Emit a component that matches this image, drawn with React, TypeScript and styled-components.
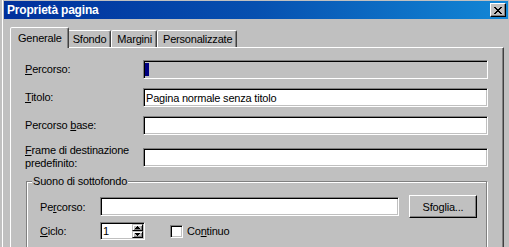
import React from 'react';
import styled, { createGlobalStyle } from 'styled-components';

const GlobalStyle = createGlobalStyle`
  * {
    box-sizing: border-box;
  }
  html,
  body {
    margin: 0;
    height: 100%;
    overflow: hidden;
    background: #c0c0c0;
  }
  body {
    font-family: 'Liberation Sans', Arial, sans-serif;
    font-size: 11px;
    letter-spacing: -0.2px;
    color: #000;
  }
  u {
    text-underline-offset: 1px;
  }
`;

const Window = styled.div`
  width: 509px;
  min-height: 100vh;
  padding: 1px 1px 0 4px;
  background: #c0c0c0;
  box-shadow: inset 2px 0 #c0c0c0, inset 3px 0 #fff;
`;

const TitleBar = styled.div`
  height: 18px;
  display: flex;
  align-items: center;
  justify-content: space-between;
  padding: 0 2px 0 3px;
  background: linear-gradient(to right, #00309c 0%, #0650b0 50%, #1287d6 100%);
`;

const Title = styled.span`
  color: #fff;
  font-weight: bold;
  font-size: 12px;
`;

const CloseButton = styled.div`
  width: 16px;
  height: 14px;
  display: flex;
  align-items: center;
  justify-content: center;
  background: #c0c0c0;
  border: 1px solid;
  border-color: #fff #000 #000 #fff;
  box-shadow: inset -1px -1px #808080;
`;

const Body = styled.div`
  padding: 8px 4px 0 6px;
`;

const Tabs = styled.div`
  display: flex;
  align-items: flex-end;
  height: 20px;
  padding-left: 2px;
  position: relative;
  z-index: 1;
`;

const Tab = styled.div<{ $active?: boolean }>`
  height: ${(p) => (p.$active ? 21 : 17)}px;
  margin: ${(p) => (p.$active ? '0 -2px -1px -2px' : '0')};
  padding: ${(p) => (p.$active ? '0 6px 0 7px' : '0 4px 0 5px')};
  display: flex;
  align-items: center;
  background: #c0c0c0;
  border: 1px solid;
  border-bottom: none;
  border-color: #fff #404040 transparent #fff;
  border-radius: 2px 2px 0 0;
  box-shadow: inset -1px 0 #808080;
  position: relative;
  z-index: ${(p) => (p.$active ? 2 : 1)};
  white-space: nowrap;
`;

const Panel = styled.div`
  min-height: 260px;
  padding: 12px 15px 20px 14px;
  border: 1px solid;
  border-color: #fff #404040 #404040 #fff;
  box-shadow: inset -1px -1px #808080;
`;

const Form = styled.div`
  display: grid;
  grid-template-columns: 118px 1fr;
  row-gap: 9px;
  align-items: center;
`;

const FormLabel = styled.div<{ $multi?: boolean }>`
  line-height: 13px;
  align-self: ${(p) => (p.$multi ? 'start' : 'center')};
`;

const Field = styled.div<{ $disabled?: boolean; $width?: number }>`
  height: ${(p) => (p.$width ? 18 : 19)}px;
  ${(p) => (p.$width ? `width: ${p.$width}px;` : 'flex: 1;')}
  display: flex;
  align-items: center;
  padding: 0 2px;
  background: ${(p) => (p.$disabled ? '#c0c0c0' : '#fff')};
  border: 1px solid;
  border-color: #808080 #fff #fff #808080;
  box-shadow: inset 1px 1px #000, inset -1px -1px #c0c0c0;
  white-space: nowrap;
  overflow: hidden;
`;

const Selection = styled.span`
  width: 4px;
  height: 13px;
  margin-left: -1px;
  background: #000080;
`;

const Group = styled.fieldset`
  margin: 5px 1px 0 1px;
  padding: 7px 9px 40px 13px;
  border: 1px solid #808080;
  box-shadow: inset 1px 1px #fff, 1px 1px #fff;
`;

const Legend = styled.legend`
  margin-left: -8px;
  padding: 0 1px;
  line-height: 13px;
  background: #c0c0c0;
`;

const GroupRow = styled.div<{ $gap?: number }>`
  display: flex;
  align-items: center;
  margin-top: ${(p) => p.$gap ?? 0}px;
`;

const GroupLabel = styled.div`
  width: 60px;
  flex: none;
`;

const Button = styled.div`
  width: 68px;
  height: 23px;
  margin-left: 10px;
  flex: none;
  display: flex;
  align-items: center;
  justify-content: center;
  background: #c0c0c0;
  border: 1px solid;
  border-color: #fff #000 #000 #fff;
  box-shadow: inset -1px -1px #808080;
`;

const SpinValue = styled.span`
  flex: 1;
`;

const SpinButtons = styled.div`
  display: flex;
  flex-direction: column;
  width: 11px;
  height: 14px;
  margin-right: -1px;
`;

const SpinButton = styled.div`
  flex: 1;
  display: flex;
  align-items: center;
  justify-content: center;
  background: #c0c0c0;
  border: 1px solid;
  border-color: #c0c0c0 #000 #000 #c0c0c0;
  box-shadow: inset 1px 1px #fff, inset -1px -1px #808080;
`;

const CheckBox = styled.div`
  width: 13px;
  height: 13px;
  margin-left: 25px;
  background: #fff;
  border: 1px solid;
  border-color: #808080 #fff #fff #808080;
  box-shadow: inset 1px 1px #000, inset -1px -1px #c0c0c0;
`;

const CheckLabel = styled.span`
  margin-left: 4px;
`;

const CloseIcon = () => (
  <svg width="8" height="7" viewBox="0 0 8 7" shapeRendering="crispEdges">
    <path
      fill="#000"
      d="M0 0h2v1H0zM6 0h2v1H6zM1 1h2v1H1zM5 1h2v1H5zM2 2h4v1H2zM3 3h2v1H3zM2 4h4v1H2zM1 5h2v1H1zM5 5h2v1H5zM0 6h2v1H0zM6 6h2v1H6z"
    />
  </svg>
);

const Arrow = ({ down }: { down?: boolean }) => (
  <svg width="5" height="3" viewBox="0 0 5 3" shapeRendering="crispEdges">
    <path
      fill="#000"
      d={down ? 'M0 0h5v1H0zM1 1h3v1H1zM2 2h1v1H2z' : 'M2 0h1v1H2zM1 1h3v1H1zM0 2h5v1H0z'}
    />
  </svg>
);

const tabs = ['Generale', 'Sfondo', 'Margini', 'Personalizzate'];

function App() {
  return (
    <>
      <GlobalStyle />
      <Window>
        <TitleBar>
          <Title>Proprietà pagina</Title>
          <CloseButton>
            <CloseIcon />
          </CloseButton>
        </TitleBar>
        <Body>
          <Tabs>
            {tabs.map((t, i) => (
              <Tab key={t} $active={i === 0}>
                {t}
              </Tab>
            ))}
          </Tabs>
          <Panel>
            <Form>
              <FormLabel>
                <u>P</u>ercorso:
              </FormLabel>
              <Field $disabled>
                <Selection />
              </Field>
              <FormLabel>
                <u>T</u>itolo:
              </FormLabel>
              <Field>Pagina normale senza titolo</Field>
              <FormLabel>
                Percorso <u>b</u>ase:
              </FormLabel>
              <Field />
              <FormLabel $multi>
                <u>F</u>rame di destinazione
                <br />
                predefinito:
              </FormLabel>
              <Field />
            </Form>
            <Group>
              <Legend>Suono di sottofondo</Legend>
              <GroupRow>
                <GroupLabel>
                  Pe<u>r</u>corso:
                </GroupLabel>
                <Field />
                <Button>
                  Sfo<u>g</u>lia...
                </Button>
              </GroupRow>
              <GroupRow $gap={4}>
                <GroupLabel>
                  <u>C</u>iclo:
                </GroupLabel>
                <Field $width={45}>
                  <SpinValue>1</SpinValue>
                  <SpinButtons>
                    <SpinButton>
                      <Arrow />
                    </SpinButton>
                    <SpinButton>
                      <Arrow down />
                    </SpinButton>
                  </SpinButtons>
                </Field>
                <CheckBox />
                <CheckLabel>
                  Co<u>n</u>tinuo
                </CheckLabel>
              </GroupRow>
            </Group>
          </Panel>
        </Body>
      </Window>
    </>
  );
}

export default App;
